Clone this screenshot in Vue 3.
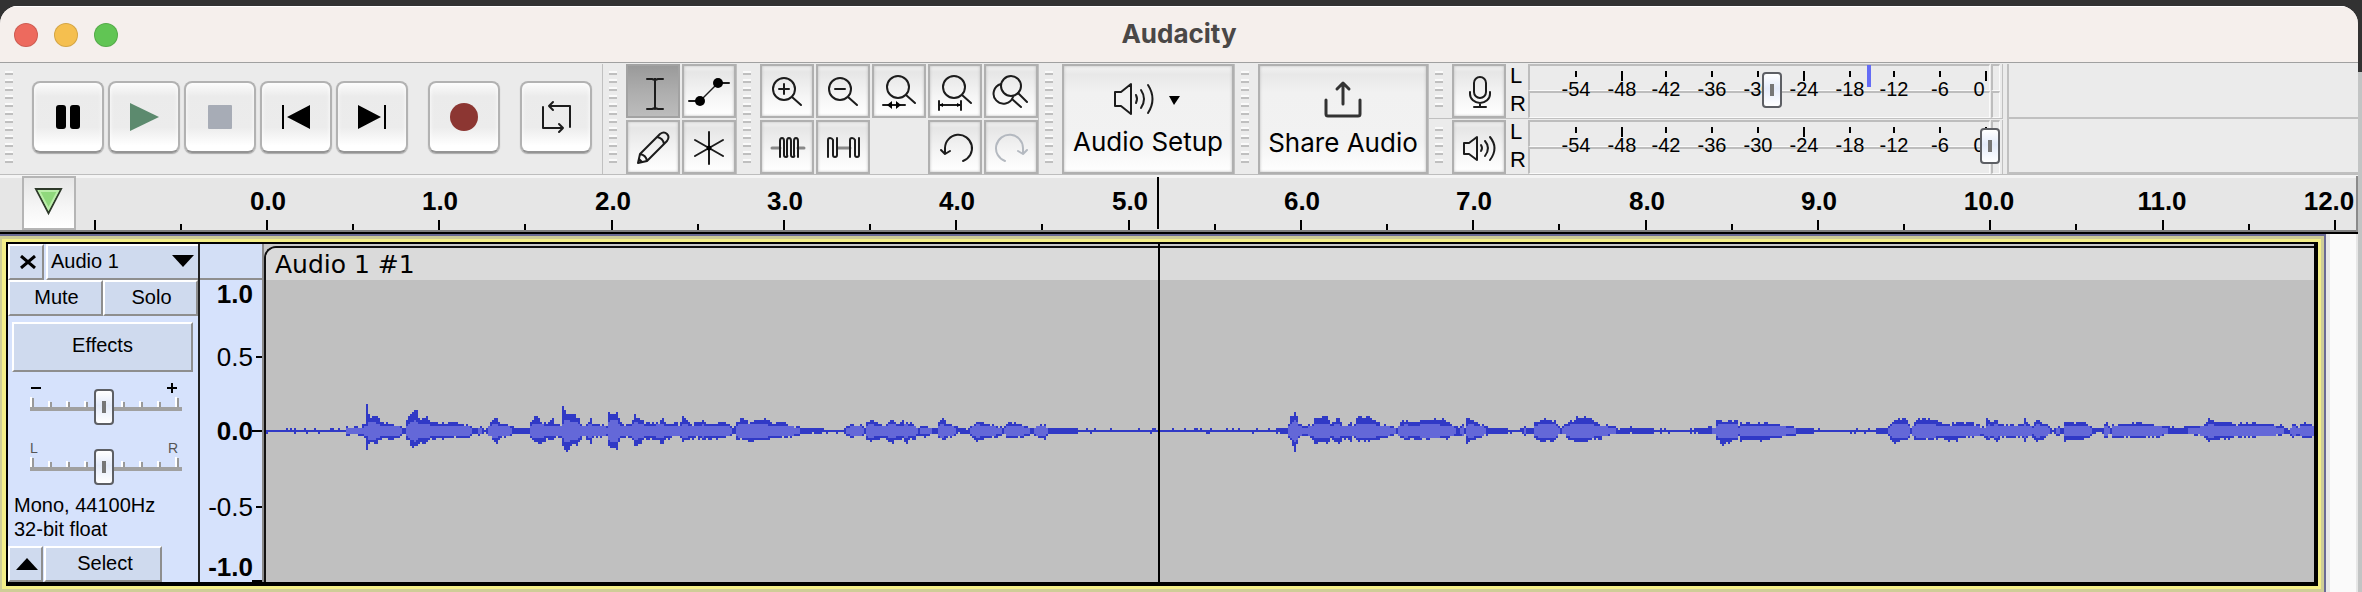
<script setup>
import { ref } from 'vue'

const PX_PER_SEC = 172.33
const RULER_ZERO = 191
const CURSOR = 1082

const seconds = Array.from({ length: 13 }, (_, i) => ({
  label: i.toFixed(1),
  tick: Math.round(RULER_ZERO + i * PX_PER_SEC),
  text: i === 12 ? 2253 : Math.round(RULER_ZERO + (i < 10 ? 1 : -1) + i * PX_PER_SEC),
}))
const longTicks = [RULER_ZERO - 172, ...seconds.map((s) => s.tick)]
const halfTicks = Array.from({ length: 13 }, (_, i) => Math.round(RULER_ZERO + (i - 0.5) * PX_PER_SEC))

const meters = [
  { name: 'Recording', kind: 'mic', level: ref(528), peak: 339 },
  { name: 'Playback', kind: 'speaker', level: ref(1000), peak: null },
]
const dbMarks = [
  [-54, 48, 0], [-48, 94, 1], [-42, 138, 0], [-36, 184, 0], [-30, 230, 0],
  [-24, 276, 1], [-18, 322, 0], [-12, 366, 0], [-6, 412, 0], [0, 458, 1],
].map(([db, x, long]) => ({ db, x, long, text: db === 0 ? 451 : x }))

const gain = ref(50)
const pan = ref(50)
const sliderTicks = [0, 18, 36, 54, 91, 109, 127, 145]

const ampLabels = [
  { v: '1.0', y: 50, bold: true },
  { v: '0.5', y: 113, tick: 6 },
  { v: '0.0', y: 187, bold: true, tick: 10 },
  { v: '-0.5', y: 263, tick: 6 },
  { v: '-1.0', y: 323, bold: true },
]

// Envelope keyframes: [x, rise above centre, drop below centre], one list per stretch of audio.
const stretches = [
  { x: 260, k: 3, e: [[18,1,1],[257,1,1],[258,4,4],[300,4,4],[316,7,6],[319,8,7],[320,27,19],[326,15,12],[345,15,13],[358,10,8],[375,9,6],[390,8,8],[400,6,8],[418,5,5],[422,3,3],[432,3,3],[440,12,8],[455,18,16],[465,21,15],[475,11,12],[495,14,12],[505,10,8],[530,7,7],[580,9,7],[600,8,7],[620,5,7],[640,3,3],[660,5,5],[672,2,2],[690,8,6],[705,15,13],[715,8,7],[740,7,6],[755,4,4],[758,3,3],[803,3,3],[812,10,8],[825,15,11],[843,8,12],[855,7,8],[873,11,8],[880,7,7],[905,5,6],[908,25,15],[915,17,22],[940,16,13],[950,13,14],[965,6,6],[975,6,6],[988,11,12],[1000,7,6],[1040,5,5],[1046,19,16],[1070,18,18],[1075,10,10],[1090,5,6],[1115,7,8],[1119,17,13],[1125,13,16],[1140,12,12],[1150,8,8],[1195,9,10],[1203,13,13],[1215,7,8],[1240,7,5],[1245,10,5],[1255,4,6],[1268,15,11],[1285,9,9]] },
  { x: 680, k: 3, e: [[8,15,10],[20,10,10],[35,7,9],[50,9,6],[65,9,10],[80,7,8],[100,7,8],[132,9,6],[150,4,5],[155,3,3],[165,4,4],[170,9,9],[180,13,9],[195,11,8],[205,8,11],[230,11,9],[260,11,8],[280,8,7],[310,9,7],[325,6,6],[355,4,4],[360,3,3],[420,3,2],[430,1,1],[485,1,1],[490,3,3],[513,6,6],[545,6,5],[555,2,2],[560,9,10],[572,11,10],[600,6,7],[610,6,7],[633,11,13],[650,7,7],[665,9,8],[675,8,13],[690,8,7],[698,7,11],[710,3,4],[735,5,5],[760,3,3],[766,1,1],[772,8,8],[785,13,9],[800,7,7],[825,5,4],[835,2,2],[862,2,2],[870,5,5],[885,9,11],[905,9,8],[920,6,7],[950,5,5],[970,3,3],[980,8,7],[1000,9,7],[1015,6,6],[1045,4,4],[1055,3,3],[1068,5,6],[1090,7,8],[1105,3,3],[1185,3,3],[1200,1,1],[1320,1,1]] },
  { x: 1250, k: 3, e: [[0,1,1],[75,1,1],[80,2,2],[110,3,3],[120,14,8],[130,19,19],[140,14,12],[145,6,7],[160,5,4],[166,2,3],[170,6,5],[185,6,8],[190,12,14],[215,15,10],[230,13,13],[240,6,6],[252,10,10],[265,13,12],[272,6,8],[290,6,7],[297,9,12],[303,5,6],[315,7,8],[320,14,10],[350,15,9],[370,9,10],[390,6,9],[400,6,7],[430,4,4],[440,3,4],[450,9,7],[465,11,8],[485,9,8],[530,12,8],[580,11,7],[595,7,7],[615,5,4],[620,2,3],[635,6,5],[645,2,3],[650,13,11],[665,10,9],[690,6,6],[705,5,4],[710,3,3],[765,3,3],[775,1,1],[815,2,2],[820,4,4],[845,2,2],[852,8,8],[875,11,10],[912,11,10],[920,6,6],[933,3,3],[940,7,4],[960,9,10],[980,13,10],[1010,14,11],[1025,10,9],[1050,6,8],[1060,7,5],[1095,4,4],[1100,2,3],[1137,4,2],[1165,3,3],[1200,3,3],[1208,1,1],[1285,1,1]] },
  { x: 1680, k: 2.3, e: [[0,1,1],[25,2,2],[60,4,3],[80,4,4],[85,12,9],[95,10,14],[125,11,10],[130,10,8],[135,3,3],[140,7,9],[180,8,10],[205,8,8],[230,6,6],[260,4,4],[275,3,3],[305,2,2],[312,1,1],[448,1,1],[450,2,2],[475,3,3],[482,6,9],[490,10,12],[515,13,9],[522,11,9],[528,3,3],[538,10,8],[560,13,8],[590,10,8],[600,7,7],[615,6,10],[640,9,9],[660,8,6],[690,5,5],[703,5,6],[706,13,10],[713,8,6],[725,11,10],[735,6,6],[765,6,7],[785,6,6],[792,13,10],[798,7,6],[810,4,6],[817,11,10],[835,7,7],[850,4,3],[855,2,2],[865,5,5],[878,3,3],[885,8,10],[925,10,8],[940,5,5],[955,3,2],[970,3,2],[980,10,8],[986,2,2],[995,6,6],[1055,8,7],[1100,6,6],[1115,5,3],[1150,3,3],[1180,5,4],[1205,6,6],[1215,13,11],[1230,9,8],[1260,9,8],[1275,6,6],[1300,9,7],[1330,8,6],[1385,5,4],[1400,2,2],[1408,6,8],[1420,4,4],[1432,9,8],[1458,6,5]] },
]

const WAVE_LEFT = 266
const MID = 31
const keys = stretches
  .flatMap((s) => s.e.map(([x, up, down]) => [s.x + x / s.k - WAVE_LEFT, up, down]))
  .sort((a, b) => a[0] - b[0])

let seed = 7
const noise = () => {
  seed = (seed * 16807) % 2147483647
  return seed / 2147483647
}
const even = (v) => Math.round(v / 2) * 2

let peakPath = ''
let rmsPath = ''
let k = 0
for (let x = 0; x < 2048; x += 2) {
  while (k < keys.length - 2 && keys[k + 1][0] < x) k++
  const [x0, u0, d0] = keys[k]
  const [x1, u1, d1] = keys[k + 1]
  const t = x1 > x0 ? Math.min(1, Math.max(0, (x - x0) / (x1 - x0))) : 0
  let up = u0 + (u1 - u0) * t
  let down = d0 + (d1 - d0) * t
  const avg = (up + down) / 2
  // A keyframe inside this column keeps its full height, so short spikes survive.
  for (const [kx, ku, kd] of keys) {
    if (kx >= x - 1 && kx < x + 1) {
      up = Math.max(up, ku)
      down = Math.max(down, kd)
    }
  }
  if (up + down < 3.2) {
    up = noise() > 0.86 ? 3 : 1
    down = noise() > 0.86 ? 3 : 1
  } else {
    const jitter = avg > 4.5 ? 2.4 : 1
    up = even(up + 1 + (noise() - 0.5) * jitter) - 1
    down = even(down + 1 + (noise() - 0.5) * jitter) - 1
  }
  peakPath += `M${x} ${MID - up}h2v${up + down}h-2z`
  if (avg > 3.8) {
    const rms = even(avg * 0.5 + 2.4) - 1
    const a = Math.min(rms, up)
    const b = Math.min(rms, down)
    rmsPath += `M${x} ${MID - a}h2v${a + b}h-2z`
  }
}
</script>

<template>
  <div class="desktop">
    <main class="window">
      <header class="titlebar">
        <div class="lights">
          <button class="light red" aria-label="Close window"></button>
          <button class="light amber" aria-label="Minimise window"></button>
          <button class="light green" aria-label="Zoom window"></button>
        </div>
        <h1>Audacity</h1>
      </header>

      <div class="toolbars">
        <section class="dock transport" aria-label="Transport">
          <i class="grab"></i>
          <div class="transport-buttons">
            <button class="big" aria-label="Pause">
              <svg viewBox="0 0 72 72"><rect x="24" y="24" width="10" height="24" rx="3" /><rect x="38" y="24" width="10" height="24" rx="3" /></svg>
            </button>
            <button class="big" aria-label="Play">
              <svg viewBox="0 0 72 72"><path d="M22 22L51 36L22 50Z" fill="#5c8a6e" /></svg>
            </button>
            <button class="big" aria-label="Stop">
              <svg viewBox="0 0 72 72"><rect x="24" y="24" width="24" height="24" rx="1" fill="#a7acb6" /></svg>
            </button>
            <button class="big" aria-label="Skip to start">
              <svg viewBox="0 0 72 72"><path d="M22 24h2v24h-2zM50 24v24L27 36z" /></svg>
            </button>
            <button class="big" aria-label="Skip to end">
              <svg viewBox="0 0 72 72"><path d="M48 24h2v24h-2zM22 24v24L45 36z" /></svg>
            </button>
            <button class="big apart" aria-label="Record">
              <svg viewBox="0 0 72 72"><circle cx="36" cy="36" r="14" fill="#8c3632" /></svg>
            </button>
            <button class="big apart" aria-label="Loop">
              <svg viewBox="0 0 72 72" class="line"><path d="M23 26V47H43M39 43L43 47L39 51M50 46V25H29M33 21L29 25L33 29" /></svg>
            </button>
          </div>
        </section>

        <section class="dock" aria-label="Tools">
          <i class="grab"></i>
          <div class="grid two">
            <button class="small active" aria-label="Selection tool">
              <svg viewBox="0 0 54 54" class="line"><path d="M29 15V45M21 15H26L29 16L32 15H37M21 45H26L29 44L32 45H37" /></svg>
            </button>
            <button class="small" aria-label="Envelope tool">
              <svg viewBox="0 0 54 54" class="line"><path d="M7 37H18M36 19H47" /><path d="M18 37L36 19" stroke-width="1.5" /><circle cx="18" cy="37" r="5" fill="#000" stroke="none" /><circle cx="36" cy="19" r="5" fill="#000" stroke="none" /></svg>
            </button>
            <button class="small" aria-label="Draw tool">
              <svg viewBox="0 0 54 54" class="line"><path d="M12 43L14 34L34 14Q38 11 41 14Q44 17 41 21L21 41L12 43ZM14 34Q20 35 21 41M31 17Q37 18 38 24M12 43L13 39L16 42Z" /></svg>
            </button>
            <button class="small" aria-label="Multi-tool">
              <svg viewBox="0 0 54 54" class="line"><path d="M27 12V44M13 20L41 36M13 36L41 20" /><circle cx="27" cy="28" r="2.5" fill="#000" stroke="none" /></svg>
            </button>
          </div>
        </section>

        <section class="dock" aria-label="Edit">
          <i class="grab"></i>
          <div class="grid five">
            <button class="small" aria-label="Zoom in">
              <svg viewBox="0 0 54 54" class="line"><circle cx="24" cy="25" r="11" /><path d="M32 33L41 41M19 25H29M24 20V30" /></svg>
            </button>
            <button class="small" aria-label="Zoom out">
              <svg viewBox="0 0 54 54" class="line"><circle cx="24" cy="25" r="11" /><path d="M32 33L41 41M19 25H29" /></svg>
            </button>
            <button class="small" aria-label="Fit selection to width">
              <svg viewBox="0 0 54 54" class="line"><circle cx="26" cy="23" r="11" /><path d="M34 31L43 39M11 41H33" /><path d="M15 41L20 37V45ZM29 41L24 37V45Z" fill="#000" stroke="none" /></svg>
            </button>
            <button class="small" aria-label="Fit project to width">
              <svg viewBox="0 0 54 54" class="line"><circle cx="26" cy="23" r="11" /><path d="M34 31L43 39M12 41H32M11 37V46M33 37V46" /><path d="M11 41L15 39V43ZM33 41L29 39V43Z" fill="#000" stroke="none" /></svg>
            </button>
            <button class="small" aria-label="Zoom toggle">
              <svg viewBox="0 0 54 54" class="line"><circle cx="27" cy="22" r="10" /><path d="M34 29L43 38M28 35L37 43M17 20A10 10 0 1 0 29 33" /></svg>
            </button>
            <button class="small" aria-label="Trim outside selection">
              <svg viewBox="0 0 54 54" class="line"><path d="M12 28H20M38 28H44" stroke="#888" stroke-width="3" /><path d="M20 37V21Q20 18 22 18T24 21V35Q24 37 26 37T27 35V21Q27 18 29 18T31 21V35Q31 37 33 37T34 35V21Q34 18 36 18T38 21V37" /></svg>
            </button>
            <button class="small" aria-label="Silence selection">
              <svg viewBox="0 0 54 54" class="line"><path d="M22 28H34" stroke="#888" stroke-width="3" /><path d="M12 37V20Q12 18 14 18T17 20V35Q17 37 19 37T21 35V18M34 37V20Q34 18 36 18T39 20V35Q39 37 41 37T43 35V18" /></svg>
            </button>
            <span></span>
            <button class="small" aria-label="Undo">
              <svg viewBox="0 0 54 54" class="line"><path d="M17 33V28A13.500 13.500 0 1 1 35 41M13 30L17 34L22 31" /></svg>
            </button>
            <button class="small" aria-label="Redo" disabled>
              <svg viewBox="0 0 54 54" class="line pale"><path d="M39 33V28A13.500 13.500 0 1 0 21 41M43 30L39 34L34 31" /></svg>
            </button>
          </div>
        </section>

        <section class="dock" aria-label="Audio setup">
          <i class="grab"></i>
          <button class="tall setup">
            <svg width="72" height="36" viewBox="0 0 72 36" class="line">
              <path d="M3 11H9L19 3V33L9 25H3ZM24 14Q26 18 24 22M29 9Q35 18 29 27M36 4Q45 18 36 32" />
              <path d="M57 15H68L62 24Z" fill="#000" stroke="none" />
            </svg>
            <span>Audio Setup</span>
          </button>
        </section>

        <section class="dock" aria-label="Share audio">
          <i class="grab"></i>
          <button class="tall share">
            <svg width="38" height="38" viewBox="0 0 38 38" class="line thick">
              <path d="M2 20V34Q2 36 4 36H34Q36 36 36 34V20M19 24V4M13 9L19 3L25 9" />
            </svg>
            <span>Share Audio</span>
          </button>
        </section>

        <div class="meters">
          <section v-for="m in meters" :key="m.name" class="dock meter-dock" :aria-label="m.name + ' meter'">
            <i class="grab"></i>
            <button class="small" :aria-label="m.name + ' meter options'">
              <svg v-if="m.kind === 'mic'" viewBox="0 0 54 54" class="line">
                <rect x="22" y="13" width="12" height="21" rx="6" /><path d="M18 28V30A10 9 0 0 0 38 30V28M28 39V43M22 43H34" />
              </svg>
              <svg v-else viewBox="0 0 54 54" class="line">
                <path d="M12 23H17L25 17V40L17 34H12ZM29 25Q31 28 29 31M33 21Q39 28 33 36M38 17Q47 28 38 40" />
              </svg>
            </button>
            <div class="channels"><span>L</span><span>R</span></div>
            <div class="meter">
              <div class="bars"><i></i><i></i></div>
              <svg class="scale" width="462" height="54">
                <rect v-if="m.peak" :x="m.peak" y="1" width="4" height="22" fill="#646cf5" />
                <g v-for="d in dbMarks" :key="d.db">
                  <rect :x="d.x - 1" y="7" width="2" :height="d.long ? 10 : 6" />
                  <text :x="d.text" y="32">{{ d.db }}</text>
                </g>
              </svg>
              <input v-model="m.level.value" class="thumb level" type="range" min="0" max="1000" :aria-label="m.name + ' volume'" />
            </div>
            <div class="clip"><i></i><i></i></div>
          </section>
        </div>
        <div class="rest"><i></i><i></i></div>
      </div>

      <div class="timeline">
        <button class="pin" aria-label="Pinned play head">
          <svg width="50" height="50" viewBox="0 0 50 50"><path d="M12 11H37L24.500 35Z" fill="#8fd87c" stroke="#2e3a2a" stroke-width="2" /><path d="M15 13H34L24.500 31Z" fill="none" stroke="#b9eda8" stroke-width="2" /></svg>
        </button>
        <svg class="ruler" height="54">
          <rect v-for="x in longTicks" :key="'l' + x" :x="x - 1" y="44" width="2" height="10" />
          <rect v-for="x in halfTicks" :key="'h' + x" :x="x - 1" y="48" width="2" height="6" />
          <text v-for="s in seconds" :key="s.label" :x="s.text" y="34">{{ s.label }}</text>
          <rect :x="CURSOR - 1" y="1" width="2" height="52" />
        </svg>
      </div>

      <div class="tracks">
        <div class="glow"><div class="halo"><div class="track">
          <section class="panel" aria-label="Audio 1 controls">
            <div class="row head">
              <button class="cell close" aria-label="Close track">
                <svg width="16" height="14" viewBox="0 0 16 14"><path d="M1 1L15 13M15 1L1 13" stroke="#000" stroke-width="3" /></svg>
              </button>
              <button class="cell name"><span>Audio 1</span>
                <svg width="22" height="12" viewBox="0 0 22 12"><path d="M0 0H22L11 12Z" /></svg>
              </button>
            </div>
            <div class="row"><button class="cell half">Mute</button><button class="cell half">Solo</button></div>
            <button class="cell effects">Effects</button>
            <div class="slider">
              <div class="ends"><svg width="12" height="12"><path d="M1 6H11" /></svg><svg width="12" height="12"><path d="M1 6H11M6 1V11" /></svg></div>
              <div class="groove">
                <svg width="152" height="36"><g v-for="t in sliderTicks" :key="t"><rect :x="t" :y="t % 145 ? 12 : 8" width="2" :height="t % 145 ? 7 : 11" fill="#fff" /><rect :x="t + 2" :y="t % 145 ? 13 : 9" width="2" :height="t % 145 ? 6 : 10" fill="#999" /></g><rect y="18" width="152" height="4" fill="#a0a0a0" /></svg>
                <input v-model="gain" class="thumb" type="range" aria-label="Gain" />
              </div>
            </div>
            <div class="slider">
              <div class="ends"><span>L</span><span>R</span></div>
              <div class="groove">
                <svg width="152" height="36"><g v-for="t in sliderTicks" :key="t"><rect :x="t" :y="t % 145 ? 12 : 8" width="2" :height="t % 145 ? 7 : 11" fill="#fff" /><rect :x="t + 2" :y="t % 145 ? 13 : 9" width="2" :height="t % 145 ? 6 : 10" fill="#999" /></g><rect y="18" width="152" height="4" fill="#a0a0a0" /></svg>
                <input v-model="pan" class="thumb" type="range" aria-label="Pan" />
              </div>
            </div>
            <p class="format">Mono, 44100Hz<br />32-bit float</p>
            <div class="row foot">
              <button class="cell fold" aria-label="Collapse track"><svg width="22" height="12" viewBox="0 0 22 12"><path d="M0 12H22L11 0Z" /></svg></button>
              <button class="cell select">Select</button>
            </div>
          </section>

          <div class="amps">
            <div class="amps-head"></div>
            <svg class="amp-scale" width="62">
              <g v-for="a in ampLabels" :key="a.v">
                <text x="53" :y="a.y + 9" :class="{ bold: a.bold }">{{ a.v }}</text>
                <rect v-if="a.tick" :x="62 - a.tick" :y="a.y - 1" :width="a.tick" height="2" />
              </g>
              <rect x="52" y="336" width="10" height="2" />
            </svg>
          </div>

          <div class="clip-lane">
            <article class="audio-clip">
              <h2>Audio 1 #1</h2>
              <div class="wave">
                <svg width="2048" height="62" shape-rendering="crispEdges">
                  <path :d="peakPath" fill="#3039c6" />
                  <path :d="rmsPath" fill="#6468d8" />
                </svg>
              </div>
            </article>
            <i class="cursor"></i>
          </div>
        </div></div></div>
        <div class="scrollbar"></div>
      </div>
    </main>
  </div>
</template>

<style>
body { margin: 0; background: #c2c4c4; }
</style>

<style scoped>
* { box-sizing: border-box; }
button { font: inherit; color: inherit; margin: 0; padding: 0; border: 0; display: block; }
svg { display: block; }
.desktop {
  min-height: 100vh; display: flex; flex-direction: column; padding: 6px 4px 0 0;
  background: linear-gradient(#323232 72px, #c2c4c4 72px);
  font-family: "Liberation Sans", Arial, sans-serif; color: #000;
}
.window { flex: 1; display: flex; flex-direction: column; background: #ebebeb; border-radius: 18px 18px 0 0; overflow: hidden; }

.titlebar { height: 57px; display: grid; grid-template-columns: 1fr auto 1fr; align-items: center; background: #f5efec; border-top: 1px solid #fff; border-bottom: 1px solid #a0a0a0; }
.lights { display: flex; gap: 16px; padding-left: 14px; }
.light { width: 24px; height: 24px; border-radius: 50%; border: 1px solid #0002; }
.red { background: #ed6a5e; }
.amber { background: #f5bf4f; }
.green { background: #61c554; }
h1 { margin: 0; padding-bottom: 2px; font: 700 26px/30px Inter, sans-serif; color: #4a4746; }

.toolbars { display: flex; border-bottom: 1px solid #bdbdbd; padding-top: 1px; }
.dock { display: flex; gap: 9px; padding-left: 6px; border-right: 1px solid #c0c0c0; }
.grab { width: 8px; flex: none; margin: 7px 0 11px; background: repeating-linear-gradient(#fafafa 0 2px, #bfbfbf 2px 4px, transparent 4px 8px); }
.transport { padding: 0 10px 0 5px; gap: 19px; }
.transport-buttons { display: flex; gap: 4px; align-items: center; padding-bottom: 4px; }
.big {
  width: 72px; height: 72px; border-radius: 8px; border: 2px solid #b2b2b2; border-bottom-color: #949494;
  background: linear-gradient(#fbfbfb, #ebebeb 20%, #ececec 65%, #fff 92%);
  box-shadow: inset 0 0 4px #fff, 0 1px 1px #aaa;
}
.big svg { width: 72px; height: 72px; margin: -2px; }
.apart { margin-left: 16px; }
.line { fill: none; stroke: #1c1c1c; stroke-width: 2; stroke-linecap: round; stroke-linejoin: round; }
.thick { stroke: #333; stroke-width: 3; }
.pale { stroke: #b4b9c0; }
.grid { display: grid; gap: 2px; grid-auto-rows: 54px; }
.two { grid-template-columns: repeat(2, 54px); }
.five { grid-template-columns: repeat(5, 54px); }
.small, .tall {
  border: 2px solid #b0b0b0; background: linear-gradient(#f2f2f2, #e6e6e6 12%, #f5f5f5 60%, #fff);
  box-shadow: inset 0 0 3px #bbb;
}
.small { width: 54px; height: 54px; flex: none; }
.small svg { width: 54px; height: 54px; margin: -2px; }
.small.active { border-color: #a2a2a2; background: linear-gradient(#9a9a9a, #adadad 50%, #bcbcbc); box-shadow: none; }
.tall { height: 110px; display: flex; flex-direction: column; align-items: center; justify-content: center; gap: 10px; font: 400 26px/30px Inter, sans-serif; background: linear-gradient(#f2f2f2, #e8e8e8 8%, #f1f1f1 25%, #f2f2f2 70%, #fff); }
.setup { width: 172px; }
.share { width: 170px; }

.meters { display: grid; gap: 2px; background: linear-gradient(#c0c0c0, #c0c0c0) 0 54px / 100% 1px no-repeat; }
.meter-dock { height: 54px; gap: 0; padding-right: 2px; }
.meter-dock .grab { margin-right: 9px; }
.channels { width: 22px; padding-left: 4px; font-size: 22px; line-height: 28px; display: flex; flex-direction: column; margin: -2px 0; }
.meter { position: relative; width: 462px; }
.bars, .clip, .rest { display: grid; grid-template-rows: 1fr 1fr; height: 54px; }
.bars i, .clip i { border: 1px solid #fafafa; border-top: 2px solid #bdbdbd; border-left: 2px solid #bdbdbd; }
.clip { width: 9px; margin-left: 1px; }
.scale { position: absolute; left: 0; top: 0; font-size: 20px; text-anchor: middle; }
.thumb { appearance: none; background: transparent; margin: 0; height: 36px; }
.thumb::-webkit-slider-runnable-track { height: 36px; background: transparent; }
.thumb::-webkit-slider-thumb {
  appearance: none; width: 20px; height: 36px; border: 2px solid #5d5f64; border-radius: 4px;
  background: linear-gradient(#777, #777) center / 4px 12px no-repeat, linear-gradient(#fff, #e4ebfa 45%, #fff);
}
.level { position: absolute; left: -10px; top: 8px; width: 482px; }
.rest { flex: 1; height: auto; margin-left: 4px; border-left: 2px solid #c0c0c0; }
.rest i { border-bottom: 2px solid #c0c0c0; }

.timeline { display: flex; border-top: 1px solid #f4f4f4; border-bottom: 2px solid #000; background: linear-gradient(#808080, #808080) bottom / 100% 2px no-repeat, linear-gradient(#f4f4f4 2px, #e6e6e6 2px); padding: 0 0 2px 22px; box-shadow: inset -2px 0 #8a8a8a; }
.pin { width: 54px; height: 54px; border: 2px solid #b5b5b5; background: linear-gradient(#e6e6e6, #f6f6f6 60%, #fff); }
.ruler { flex: 1; min-width: 0; font-size: 26px; font-weight: 700; text-anchor: middle; }

.tracks { flex: 1; display: flex; background: #fafafa; }
.glow { flex: 1; min-width: 0; display: flex; background: #cfcd97; border: solid #6b6b94; border-width: 2px 2px 0 0; padding: 3px 3px 3px 2px; }
.halo { flex: 1; min-width: 0; display: flex; background: #f4ef88; padding: 3px 3px 3px 4px; }
.track { flex: 1; min-width: 0; display: flex; border: solid #000; border-width: 2px 4px 4px 2px; background: #d6e2fc; }
.scrollbar { width: 32px; border-left: 4px solid #e8e8e8; border-right: 2px solid #e6e6e6; }

.panel { width: 192px; flex: none; display: flex; flex-direction: column; border-right: 2px solid #222; font-size: 20px; }
.row { display: flex; }
.cell { height: 36px; background: #cfdaee; border: 2px solid; border-color: #fff #8e8e8e #8e8e8e #fff; display: flex; align-items: center; justify-content: center; }
.close { width: 36px; padding-left: 4px; }
.name { flex: 1; margin-left: 2px; border-right: 0; justify-content: space-between; padding: 0 4px 2px 3px; }
.half { flex: 1; padding: 0 0 2px 2px; }
.effects { height: 50px; margin: 6px 5px 10px 4px; padding-bottom: 4px; }
.slider { padding: 0 16px 0 22px; display: flex; flex-direction: column; height: 60px; }
.ends { display: flex; justify-content: space-between; align-items: center; height: 12px; padding-right: 4px; font-size: 14px; line-height: 12px; color: #555; }
.ends path { stroke: #000; stroke-width: 2; }
.groove { position: relative; margin-top: -5px; }
.groove .thumb { position: absolute; left: 0; top: 0; width: 148px; }
.format { margin: -9px 0 0 6px; line-height: 24px; }
.foot { margin-top: auto; gap: 1px; }
.fold { width: 35px; padding-left: 2px; }
.select { width: 118px; padding: 0 0 2px 4px; }

.amps { width: 64px; flex: none; border-right: 2px solid #8a8a8a; display: flex; flex-direction: column; position: relative; }
.amps-head { height: 36px; background: #d3dff6; border-bottom: 2px solid #8e8e8e; }
.amp-scale { position: absolute; left: 0; top: 0; height: 100%; font-size: 26px; text-anchor: end; }
.bold { font-weight: 700; }

.clip-lane { flex: 1; min-width: 0; position: relative; display: flex; background: #c9c9c9; padding-top: 2px; }
.audio-clip { flex: 1; min-width: 0; display: flex; flex-direction: column; border: solid #111; border-width: 2px 0 0 2px; border-radius: 12px 0 0 0; overflow: hidden; background: #c0c0c0; }
h2 { margin: 0; height: 32px; padding-left: 9px; background: #dadada; font: 400 25px/34px "DejaVu Sans", sans-serif; }
.wave { flex: 1; display: flex; align-items: center; overflow: hidden; }
.wave svg { flex: none; }
.cursor { position: absolute; left: 894px; top: 0; bottom: 0; width: 2px; background: #000; }
</style>
